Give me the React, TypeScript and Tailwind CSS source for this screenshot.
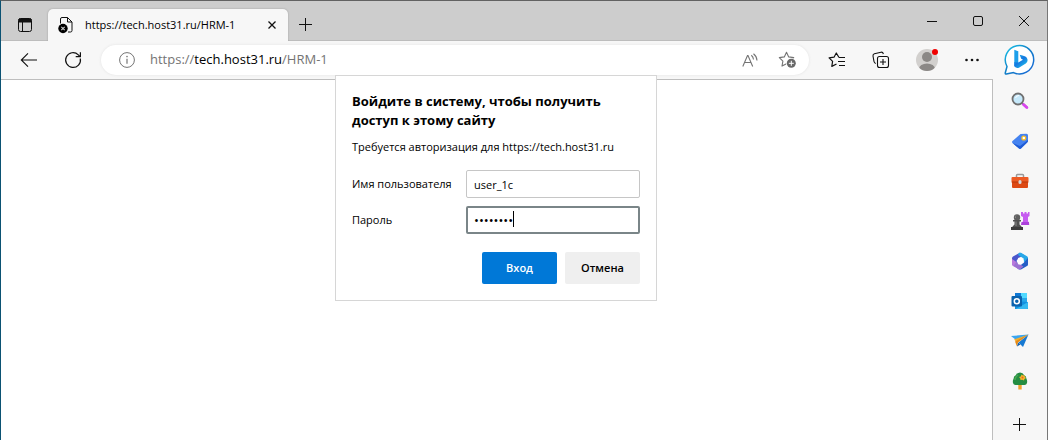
import { useState } from "react";
import type { ReactNode } from "react";

interface IconButtonProps {
  label: string;
  className?: string;
  children: ReactNode;
}

function IconButton({ label, className = "", children }: IconButtonProps) {
  return (
    <button type="button" aria-label={label} className={`flex shrink-0 items-center justify-center ${className}`}>
      {children}
    </button>
  );
}

function WorkspacesIcon() {
  return (
    <svg width="14" height="14" viewBox="0 0 14 14" fill="none" stroke="#111">
      <rect x="0.5" y="0.5" width="13" height="13" rx="2" />
      <path d="M1 1h12v3H1z" fill="#111" />
      <path d="M4.5 4v9.5" />
    </svg>
  );
}

function BlockedPageIcon() {
  return (
    <svg width="16" height="18" viewBox="0 0 16 18" fill="none">
      <path d="M2.500 7.500V3q0-1.500 1.500-1.500h5.500l4.500 4.500v8.500q0 1.500-1.500 1.500H10" stroke="#111" />
      <path d="M9.500 1.500V6H14" stroke="#111" />
      <circle cx="5" cy="12.500" r="4.700" fill="#000" />
      <path d="M3.300 10.800l3.400 3.400M6.700 10.800l-3.400 3.400" stroke="#ccc" strokeWidth="1.100" />
    </svg>
  );
}

function BackIcon() {
  return (
    <svg width="18" height="16" viewBox="0 0 18 16" fill="none" stroke="#111" strokeWidth="1.100">
      <path d="M17 8H1.500M8 1.300L1.300 8 8 14.700" />
    </svg>
  );
}

function ReloadIcon() {
  return (
    <svg width="18" height="18" viewBox="0 0 18 18" fill="none" stroke="#111" strokeWidth="1.200">
      <path d="M16.300 7.500A7.400 7.400 0 1 1 14.300 3.800l1.700 1.700" />
      <path d="M16.400 1.200v4.500h-4.700" />
    </svg>
  );
}

function InfoIcon() {
  return (
    <svg width="16" height="16" viewBox="0 0 16 16" fill="none" stroke="#747474">
      <circle cx="8" cy="8" r="7.400" />
      <path d="M8 6.800v5" strokeWidth="1.200" />
      <circle cx="8" cy="4.600" r="0.800" fill="#747474" stroke="none" />
    </svg>
  );
}

function ReadAloudIcon() {
  return (
    <svg width="16" height="15" viewBox="0 0 16 15" fill="none" stroke="#747474" strokeWidth="1.100">
      <path d="M.8 13.500L5.500 2.500h.5l4.700 11M2.700 9.500h6.200" />
      <path d="M9.300 2.300q2 1.500 2.200 4.200M11.500.8q3.200 2.500 3.500 6.700" />
    </svg>
  );
}

const STAR = "M8.500 1.300l2.200 4.600 5 .7-3.600 3.500.8 5-4.400-2.400-4.500 2.400.9-5L1.300 6.600l5-.7z";

function AddFavoriteIcon() {
  return (
    <svg width="19" height="18" viewBox="0 0 19 18" fill="none">
      <path d={STAR} stroke="#747474" strokeWidth="1.100" strokeLinejoin="round" />
      <circle cx="13.300" cy="12.300" r="5.300" fill="#fff" />
      <circle cx="13.300" cy="12.300" r="4.500" fill="#686868" />
      <path d="M13.300 9.800v5M10.800 12.300h5" stroke="#fff" />
    </svg>
  );
}

function FavoritesIcon() {
  return (
    <svg width="18" height="16" viewBox="0 0 18 16" fill="none" stroke="#111" strokeWidth="1.200" strokeLinejoin="round">
      <path d="M11 5.500L8.300 1 6 5.200l-4.900.7 3.500 3.500-.8 5 4.700-2.400" />
      <path d="M11 5.500h6M10 9.500h7M11 13.500h6" />
    </svg>
  );
}

function CollectionsIcon() {
  return (
    <svg width="18" height="18" viewBox="0 0 18 18" fill="none" stroke="#111" strokeWidth="1.100">
      <rect x="5.500" y="5.500" width="11" height="11" rx="2" />
      <path d="M11 8v6M8 11h6" />
      <path d="M3.800 12.500q-1.500-.5-1.800-2L1 5q-.2-1.700 1.400-2.200L9 1.200q1.800-.3 2.400 1.800" />
    </svg>
  );
}

function Avatar() {
  return (
    <span className="relative block size-[22px]">
      <svg width="22" height="22" viewBox="0 0 22 22">
        <defs>
          <clipPath id="avatar-circle">
            <circle cx="11" cy="11" r="11" />
          </clipPath>
        </defs>
        <g clipPath="url(#avatar-circle)">
          <rect width="22" height="22" fill="#d2d0ce" />
          <circle cx="11" cy="8" r="5" fill="#8b8886" />
          <ellipse cx="11" cy="20" rx="8" ry="5.500" fill="#8b8886" />
        </g>
      </svg>
      <span className="absolute top-0 right-0 size-[6px] rounded-full bg-[#f00000]" />
    </span>
  );
}

function MoreIcon() {
  return (
    <svg width="14" height="4" viewBox="0 0 14 4" fill="#111">
      <circle cx="1.500" cy="2" r="1.300" />
      <circle cx="7" cy="2" r="1.300" />
      <circle cx="12.500" cy="2" r="1.300" />
    </svg>
  );
}

function PlusIcon() {
  return (
    <svg width="14" height="14" viewBox="0 0 14 14" stroke="#111">
      <path d="M6.500 0v13M0 6.500h13" />
    </svg>
  );
}

function BingIcon() {
  return (
    <svg width="32" height="32" viewBox="0 0 32 32" fill="none">
      <defs>
        <linearGradient id="bing-ring" x1="0" y1="0" x2="1" y2="1">
          <stop offset="0" stopColor="#1cc8ea" />
          <stop offset="0.450" stopColor="#1181c8" />
          <stop offset="1" stopColor="#1866d8" />
        </linearGradient>
        <linearGradient id="bing-b" x1="0" y1="0" x2="0.800" y2="1">
          <stop offset="0" stopColor="#1fb5ef" />
          <stop offset="0.500" stopColor="#1478e0" />
          <stop offset="1" stopColor="#22c3e8" />
        </linearGradient>
      </defs>
      <path d="M2.500 31q-1.200 0-1-1.300L3 23.500A14.300 14.300 0 1 1 10 29.500z" fill="#000" opacity="0.080" />
      <path d="M2.200 30Q1 30 1.300 28.800L3 22.500A14.200 14.200 0 1 1 9.500 28.600z" fill="#fff" stroke="url(#bing-ring)" strokeWidth="1.500" />
      <path d="M10.300 5.800l4 1.500v11.700l-4 3.400z" fill="#1c9fea" />
      <path d="M10.300 18v4.300q2.200 2.700 5 1.200l6.500-4q2.800-2.200 1.200-5.300-1-2.200-7.300-3.400l1.500 4 1.800.9-4.700 2.800z" fill="url(#bing-b)" />
    </svg>
  );
}

function SearchIcon() {
  return (
    <svg width="18" height="18" viewBox="0 0 18 18">
      <path d="M11 11l5 4.500" stroke="#777" strokeWidth="2" />
      <path d="M12.500 12.500l3.300 3" stroke="#d946ef" strokeWidth="3" strokeLinecap="round" />
      <circle cx="7" cy="7" r="5.500" fill="#c6e9fb" stroke="#707070" strokeWidth="1.800" />
      <path d="M4.500 6q1-2.500 3.500-2.500" stroke="#fff" fill="none" />
    </svg>
  );
}

function ShoppingIcon() {
  return (
    <svg width="18" height="18" viewBox="0 0 18 18">
      <path d="M9.500 2l6-.2q1.500 0 1.500 1.500v5.500q0 .8-.6 1.400L10 16.500q-1 .9-2 0L1.500 11q-1-1 0-2z" fill="#4583f0" />
      <path d="M1.500 11L8 16.500q1 .9 2 0l6.400-6.300q.6-.6.6-1.400V8l-8 6z" fill="#1f5cd6" />
      <circle cx="12.800" cy="6" r="1.900" fill="#fff" stroke="#f6bd2b" strokeWidth="1.300" />
    </svg>
  );
}

function ToolsIcon() {
  return (
    <svg width="18" height="18" viewBox="0 0 18 18">
      <path d="M5.500 6V3.500q0-1 1-1h5q1 0 1 1V6" fill="none" stroke="#999" strokeWidth="1.500" />
      <rect x="0.500" y="5" width="17" height="6" rx="1" fill="#ed5b25" />
      <path d="M1 10h16v5q0 1-1 1H2q-1 0-1-1z" fill="#dd4a15" />
      <path d="M1 10h16" stroke="#b5380d" />
      <rect x="7.500" y="8" width="3" height="4" rx="1.500" fill="#d8d8d8" />
    </svg>
  );
}

function GamesIcon() {
  return (
    <svg width="20" height="20" viewBox="0 0 20 20">
      <path d="M11 1h2v1.500h1.500V1h2v1.500H18V1h1.500v4L18 6v4l1.500 3.500h-8L13 10V6l-2-1z" fill="#c65cf0" />
      <path d="M11.500 11h7.500v3h-8z" fill="#ac41db" />
      <circle cx="7" cy="6.500" r="3.200" fill="#606060" />
      <path d="M3 9h8v1.500H9.500v3l2 2V17h-9v-1.500l2-2v-3H3z" fill="#515151" />
      <path d="M1 16h12v3H1z" fill="#3d3d3d" />
      <path d="M6 4.500q-1 1-.5 2.500M6 10.500V15" stroke="#888" fill="none" />
    </svg>
  );
}

function Microsoft365Icon() {
  return (
    <svg width="18" height="18" viewBox="0 0 18 18">
      <path d="M2 4.500L9 .7l4 2.300-6 3.500v5L1 13V6.500q0-1.300 1-2z" fill="#4b57cc" />
      <path d="M8 .7h2l6 3.600q1 .6 1 1.800V12l-4.300-2.500v-3L7 3z" fill="#27a8e8" />
      <path d="M17 6v6.500q0 1-1 1.600l-6 3.300H8l-3-2 7.500-4.500z" fill="#255fc7" />
      <path d="M1 7l4.500 3v3l4 2.400-1.500 2L2 14q-1-.6-1-1.600z" fill="#b879dc" />
      <path d="M5.300 10l7.200 4.500-3.500 3-6.500-3.500z" fill="#9b72d2" />
      <path d="M7.500 5.800h3L13 9l-2.500 3.400h-3L5.500 9z" fill="#fff" />
    </svg>
  );
}

function OutlookIcon() {
  return (
    <svg width="18" height="18" viewBox="0 0 18 18">
      <rect x="4" y="1" width="12" height="12" fill="#28a8ea" />
      <path d="M10 1h6v5h-6z" fill="#50d9ff" />
      <path d="M4 1h6v5H4z" fill="#0f78d4" />
      <path d="M4 9l13 1v7H4z" fill="#1490df" />
      <path d="M5 17l12-7v6q0 1-1 1z" fill="#35b8f1" />
      <rect x="0.500" y="4" width="10.500" height="10.500" rx="1" fill="#0a62ad" />
      <circle cx="5.800" cy="9.200" r="2.500" fill="none" stroke="#fff" strokeWidth="1.500" />
    </svg>
  );
}

function DropIcon() {
  return (
    <svg width="18" height="18" viewBox="0 0 18 18">
      <path d="M0 4l17.500-1.500L7 9.500z" fill="#3ba5f0" />
      <path d="M17.500 2.500L12 15 7.500 10.500z" fill="#1679d2" />
      <path d="M3 7.500L17.500 2.500 5 9.500z" fill="#f3ae2b" />
      <path d="M4 9.500l13.500-7L7 10.500l-1 4z" fill="#e88b15" />
      <path d="M6 14.500l1.200-4 2.200 2z" fill="#125eaa" />
    </svg>
  );
}

function TreeIcon() {
  return (
    <svg width="18" height="18" viewBox="0 0 18 18">
      <path d="M7.300 12h3.400v5.500H7.300z" fill="#f1a22c" />
      <path d="M5 3q1-2.500 4-2.500T13 3q2.500 1 2.500 4 1 1.500.5 4-.5 2-2.500 2h-9Q2.500 13 2 11q-.5-2.500.5-4Q2.500 4 5 3z" fill="#258d42" />
      <path d="M4 8q0-3 3-5" stroke="#45a950" fill="none" strokeWidth="1.500" />
      <path d="M10.500 2.500l1.500 1 1.500-.5.300 1.800 1.200 1.200-1.500 1-.5 1.500-1.700-.7L9.500 8l-.3-1.800L8 5l1.800-.5z" fill="#f5b52d" />
      <circle cx="11.500" cy="5.500" r="1" fill="#e8661b" />
    </svg>
  );
}

const apps = [
  { label: "Поиск", icon: <SearchIcon /> },
  { label: "Покупки", icon: <ShoppingIcon /> },
  { label: "Инструменты", icon: <ToolsIcon /> },
  { label: "Игры", icon: <GamesIcon /> },
  { label: "Microsoft 365", icon: <Microsoft365Icon /> },
  { label: "Outlook", icon: <OutlookIcon /> },
  { label: "Drop", icon: <DropIcon /> },
  { label: "Tree", icon: <TreeIcon /> },
];

function TitleBar() {
  return (
    <header className="flex h-10 justify-between border-b border-[#bdbdbd] bg-[#cdcdcd]">
      <div className="flex items-end">
        <IconButton label="Рабочие области" className="h-[30px] w-[47px]">
          <WorkspacesIcon />
        </IconButton>
        <div className="-mb-px flex h-8 w-60 items-center rounded-t-[5px] bg-[#f7f7f7] pr-2 pl-[10px] shadow-[0_0_2px_#999] [clip-path:inset(-3px_-3px_0_-3px)]">
          <BlockedPageIcon />
          <span className="ml-[11px] flex-1 whitespace-nowrap text-[11px]">https://tech.host31.ru/HRM-1</span>
          <IconButton label="Закрыть вкладку" className="size-4">
            <svg width="8" height="8" viewBox="0 0 8 8" stroke="#111" strokeWidth="1.300">
              <path d="M.5.500l7 7M7.500.500l-7 7" />
            </svg>
          </IconButton>
        </div>
        <IconButton label="Новая вкладка" className="h-[30px] w-9">
          <PlusIcon />
        </IconButton>
      </div>
      <div className="flex">
        <IconButton label="Свернуть" className="w-[46px]">
          <svg width="10" height="10" viewBox="0 0 10 10" stroke="#111">
            <path d="M0 5.500h10" />
          </svg>
        </IconButton>
        <IconButton label="Развернуть" className="w-[46px]">
          <svg width="10" height="10" viewBox="0 0 10 10" fill="none" stroke="#111">
            <rect x="0.500" y="0.500" width="9" height="9" rx="1.500" />
          </svg>
        </IconButton>
        <IconButton label="Закрыть" className="w-[46px]">
          <svg width="10" height="10" viewBox="0 0 10 10" stroke="#111">
            <path d="M0 0l10 10M10 0L0 10" />
          </svg>
        </IconButton>
      </div>
    </header>
  );
}

function Toolbar() {
  return (
    <div className="flex h-[38px] items-center">
      <div className="flex w-[100px] shrink-0 pl-[6px]">
        <IconButton label="Назад" className="h-8 w-11">
          <BackIcon />
        </IconButton>
        <IconButton label="Обновить" className="h-8 w-11">
          <ReloadIcon />
        </IconButton>
      </div>
      <div className="flex h-[30px] min-w-0 flex-1 items-center rounded-full bg-white pr-3 pl-[18px] shadow-[0_0_3px_#e2e2e2]">
        <InfoIcon />
        <span className="ml-[15px] flex-1 whitespace-nowrap text-[13px] text-[#747474]">
          https://<span className="text-black">tech.host31.ru</span>/HRM-1
        </span>
        <div className="flex gap-5">
          <IconButton label="Прочесть вслух">
            <ReadAloudIcon />
          </IconButton>
          <IconButton label="Добавить в избранное">
            <AddFavoriteIcon />
          </IconButton>
        </div>
      </div>
      <div className="flex shrink-0 pl-[6px]">
        <IconButton label="Избранное" className="h-8 w-11">
          <FavoritesIcon />
        </IconButton>
        <IconButton label="Коллекции" className="h-8 w-11">
          <CollectionsIcon />
        </IconButton>
        <IconButton label="Профиль" className="h-8 w-12">
          <Avatar />
        </IconButton>
        <IconButton label="Меню" className="h-8 w-[42px]">
          <MoreIcon />
        </IconButton>
      </div>
    </div>
  );
}

function LoginDialog() {
  const [user, setUser] = useState("user_1c");
  const [password, setPassword] = useState("password");

  return (
    <form
      role="dialog"
      aria-labelledby="login-title"
      onSubmit={(e) => e.preventDefault()}
      className="w-[322px] border border-[#d6d6d6] bg-white p-4 text-[11px]"
    >
      <h1 id="login-title" className="text-[13px] leading-[19px] font-bold">
        Войдите в систему, чтобы получить доступ к этому сайту
      </h1>
      <p className="mt-2 leading-[18px] whitespace-nowrap">Требуется авторизация для https://tech.host31.ru</p>
      <div className="mt-[14px] grid grid-cols-[1fr_174px] items-center gap-y-2">
        <label htmlFor="user" className="whitespace-nowrap">
          Имя пользователя
        </label>
        <input
          id="user"
          value={user}
          onChange={(e) => setUser(e.target.value)}
          className="h-7 w-full rounded-[2px] border border-[#c6c6c6] px-[7px] outline-none"
        />
        <label htmlFor="password">Пароль</label>
        <div className="relative">
          <input
            id="password"
            type="password"
            value={password}
            onChange={(e) => setPassword(e.target.value)}
            className="block h-7 w-full rounded-[2px] border-2 border-[#7a8588] px-[6px] text-[13px] outline-none"
          />
          <span className="absolute top-[5px] left-[47px] h-4 w-px bg-black" />
        </div>
      </div>
      <div className="mt-[18px] flex justify-end gap-2 font-semibold">
        <button type="submit" className="h-8 w-[75px] rounded-[2px] bg-[#0078d7] text-white">
          Вход
        </button>
        <button type="button" className="h-8 w-[75px] rounded-[2px] bg-[#efefef]">
          Отмена
        </button>
      </div>
    </form>
  );
}

function Sidebar() {
  return (
    <aside className="flex w-[54px] shrink-0 flex-col items-center pt-[3px]">
      <IconButton label="Bing" className="size-8">
        <BingIcon />
      </IconButton>
      <nav className="mt-[5px] flex flex-1 flex-col items-center">
        {apps.map((app) => (
          <IconButton key={app.label} label={app.label} className="size-10">
            {app.icon}
          </IconButton>
        ))}
      </nav>
      <IconButton label="Настроить" className="h-[30px] w-10">
        <PlusIcon />
      </IconButton>
    </aside>
  );
}

export default function App() {
  return (
    <div className="flex min-h-screen flex-col border-t border-r border-l border-t-[#626262] border-r-[#777] border-l-[#0b5273] bg-[#f7f7f7] font-['Open_Sans','Noto_Sans',sans-serif] text-black">
      <TitleBar />
      <div className="flex flex-1">
        <div className="relative flex min-w-0 flex-1 flex-col">
          <Toolbar />
          <main className="flex-1 border-t border-r border-[#bebebe] bg-white" />
          <div className="absolute right-0.5 left-0 top-[34px] flex justify-center">
            <LoginDialog />
          </div>
        </div>
        <Sidebar />
      </div>
    </div>
  );
}
